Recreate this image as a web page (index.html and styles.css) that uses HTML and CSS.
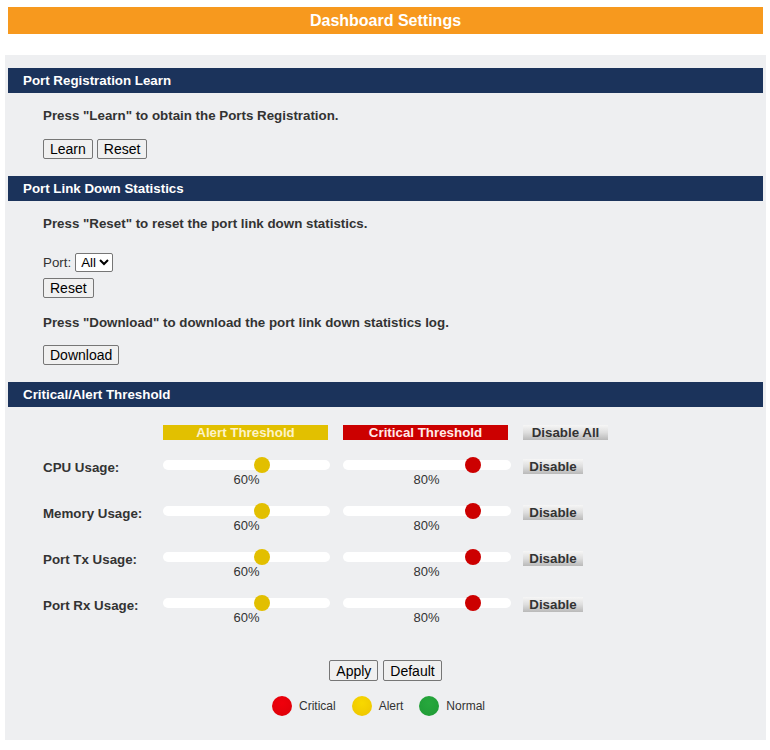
FILE: index.html
```html
<!DOCTYPE html>
<html>
<head>
<meta charset="utf-8">
<title>Dashboard Settings</title>
<link rel="stylesheet" href="styles.css">
</head>
<body>
<div class="title">Dashboard Settings</div>
<div class="panel">
  <div class="sec-head">Port Registration Learn</div>
  <div class="sec-body">
    <p class="note">Press "Learn" to obtain the Ports Registration.</p>
    <div class="btns"><button class="btn">Learn</button><button class="btn">Reset</button></div>
  </div>

  <div class="sec-head">Port Link Down Statistics</div>
  <div class="sec-body">
    <p class="note">Press "Reset" to reset the port link down statistics.</p>
    <div class="port-row"><span class="port-label">Port:</span><select class="sel"><option>All</option></select></div>
    <div class="btns mt6"><button class="btn">Reset</button></div>
    <p class="note mt17">Press "Download" to download the port link down statistics log.</p>
    <div class="btns"><button class="btn">Download</button></div>
  </div>

  <div class="sec-head">Critical/Alert Threshold</div>
  <div class="sec-body thr-body">
    <div class="thr-grid">
      <div></div>
      <div class="bar bar-alert">Alert Threshold</div>
      <div class="bar bar-crit">Critical Threshold</div>
      <div><button class="gbtn gbtn-all">Disable All</button></div>
    </div>

    <div class="thr-grid row">
      <div class="row-label">CPU Usage:</div>
      <div class="cell"><input type="range" class="rng alert" min="0" max="100" value="60"><div class="pct">60%</div></div>
      <div class="cell"><input type="range" class="rng crit" min="0" max="100" value="80"><div class="pct">80%</div></div>
      <div><button class="gbtn gbtn-one">Disable</button></div>
    </div>
    <div class="thr-grid row">
      <div class="row-label">Memory Usage:</div>
      <div class="cell"><input type="range" class="rng alert" min="0" max="100" value="60"><div class="pct">60%</div></div>
      <div class="cell"><input type="range" class="rng crit" min="0" max="100" value="80"><div class="pct">80%</div></div>
      <div><button class="gbtn gbtn-one">Disable</button></div>
    </div>
    <div class="thr-grid row">
      <div class="row-label">Port Tx Usage:</div>
      <div class="cell"><input type="range" class="rng alert" min="0" max="100" value="60"><div class="pct">60%</div></div>
      <div class="cell"><input type="range" class="rng crit" min="0" max="100" value="80"><div class="pct">80%</div></div>
      <div><button class="gbtn gbtn-one">Disable</button></div>
    </div>
    <div class="thr-grid row">
      <div class="row-label">Port Rx Usage:</div>
      <div class="cell"><input type="range" class="rng alert" min="0" max="100" value="60"><div class="pct">60%</div></div>
      <div class="cell"><input type="range" class="rng crit" min="0" max="100" value="80"><div class="pct">80%</div></div>
      <div><button class="gbtn gbtn-one">Disable</button></div>
    </div>

    <div class="actions"><button class="btn">Apply</button><button class="btn">Default</button></div>

    <div class="legend">
      <div class="lg-item"><span class="dot dot-crit"></span>Critical</div>
      <div class="lg-item"><span class="dot dot-alert"></span>Alert</div>
      <div class="lg-item"><span class="dot dot-normal"></span>Normal</div>
    </div>
  </div>
</div>
</body>
</html>
```
FILE: styles.css
```css
* { box-sizing: border-box; }
body {
  margin: 0;
  background: #ffffff;
  font-family: "Liberation Sans", Arial, sans-serif;
  color: #333333;
}
.title {
  margin: 7px 7px 0 8px;
  height: 27px;
  line-height: 27px;
  background: #f7991e;
  color: #ffffff;
  font-weight: bold;
  font-size: 16px;
  text-align: center;
}
.panel {
  margin: 21px 4px 0 5px;
  width: 761px;
  background: #eeeff1;
  padding: 13px 3px 0 3px;
}
.sec-head {
  height: 25px;
  line-height: 25px;
  background: #1b335b;
  color: #ffffff;
  font-weight: bold;
  font-size: 13.33px;
  padding-left: 15px;
}
.sec-body {
  padding: 15px 0 17px 35px;
}
.note {
  margin: 0 0 15px 0;
  font-size: 13.33px;
  line-height: 16px;
  font-weight: bold;
  color: #333333;
}
.mt17 { margin-top: 17px; margin-bottom: 14px; }
.mt6 { margin-top: 6px; }
.btns { display: flex; gap: 4px; }
.btn {
  font-family: "Liberation Sans", Arial, sans-serif;
  font-size: 14px;
  line-height: 16px;
  height: 20px;
  padding: 1px 6px;
  border: 1px solid #767676;
  border-radius: 2px;
  background: #f0f0f0;
  color: #000000;
  margin: 0;
}
.port-row {
  margin-top: 21px;
  display: flex;
  align-items: center;
  gap: 4px;
  height: 19px;
}
.port-label { font-size: 13.33px; color: #333333; }
.sel {
  font-family: "Liberation Sans", Arial, sans-serif;
  font-size: 13.33px;
  height: 19px;
  border: 1px solid #767676;
  border-radius: 2px;
  background: #ffffff;
  color: #000000;
  padding: 0 0 0 1px;
}
.thr-body { padding: 18px 0 24px 35px; }
.thr-grid {
  display: grid;
  grid-template-columns: 120px 167px 181px 97px;
}
.thr-grid > :nth-child(3) { margin-left: 13px; }
.thr-grid > :nth-child(4) { margin-left: 12px; }
.bar {
  height: 15px;
  line-height: 16px;
  font-size: 13.33px;
  font-weight: bold;
  text-align: center;
  overflow: hidden;
}
.bar-alert { background: #e2c000; color: #fdf3c8; width: 165px; }
.bar-crit { background: #cc0000; color: #ffe9e9; width: 165px; }
.gbtn {
  display: block;
  height: 15px;
  padding: 0;
  border: none;
  font-family: "Liberation Sans", Arial, sans-serif;
  font-size: 13.33px;
  line-height: 16px;
  font-weight: bold;
  color: #333333;
  background: linear-gradient(to bottom, #f6f6f6 0%, #dedede 50%, #b9b9b9 100%);
  text-align: center;
}
.gbtn-all { width: 85px; }
.gbtn-one { width: 60px; margin-top: -1px; }
.row { margin-top: 20px; height: 26px; }
.row-label {
  font-size: 13.33px;
  font-weight: bold;
  line-height: 16px;
  color: #333333;
}
.cell { display: flex; flex-direction: column; }
.rng {
  -webkit-appearance: none;
  appearance: none;
  display: block;
  margin: 0;
  padding: 0;
  height: 10px;
  background: transparent;
}
.alert.rng { width: 167px; }
.crit.rng { width: 168px; }
.rng::-webkit-slider-runnable-track {
  height: 10px;
  background: #ffffff;
  border-radius: 5px;
}
.rng::-webkit-slider-thumb {
  -webkit-appearance: none;
  width: 16px;
  height: 16px;
  border-radius: 50%;
  margin-top: -3px;
  border: none;
}
.alert.rng::-webkit-slider-thumb { background: #e2bf00; }
.crit.rng::-webkit-slider-thumb { background: #cc0000; }
.pct {
  margin-top: 2px;
  font-size: 13px;
  line-height: 15px;
  color: #333333;
  text-align: center;
  width: 167px;
}
.actions {
  margin: 36px 0 0 -35px;
  display: flex;
  justify-content: center;
  gap: 5px;
}
.actions .btn { height: 21px; }
.legend {
  margin: 15px 0 0 -35px;
  display: flex;
  justify-content: center;
  gap: 16px;
  padding-right: 14px;
}
.lg-item {
  display: flex;
  align-items: center;
  gap: 7px;
  font-size: 12px;
  line-height: 20px;
  color: #333333;
}
.dot {
  display: block;
  width: 20px;
  height: 20px;
  border-radius: 50%;
}
.dot-crit { background: radial-gradient(circle at 50% 35%, #f0000c, #dc0008); }
.dot-alert { background: radial-gradient(circle at 50% 35%, #f8d800, #edc400); }
.dot-normal { background: radial-gradient(circle at 50% 35%, #27a83d, #1f9a35); }
```
